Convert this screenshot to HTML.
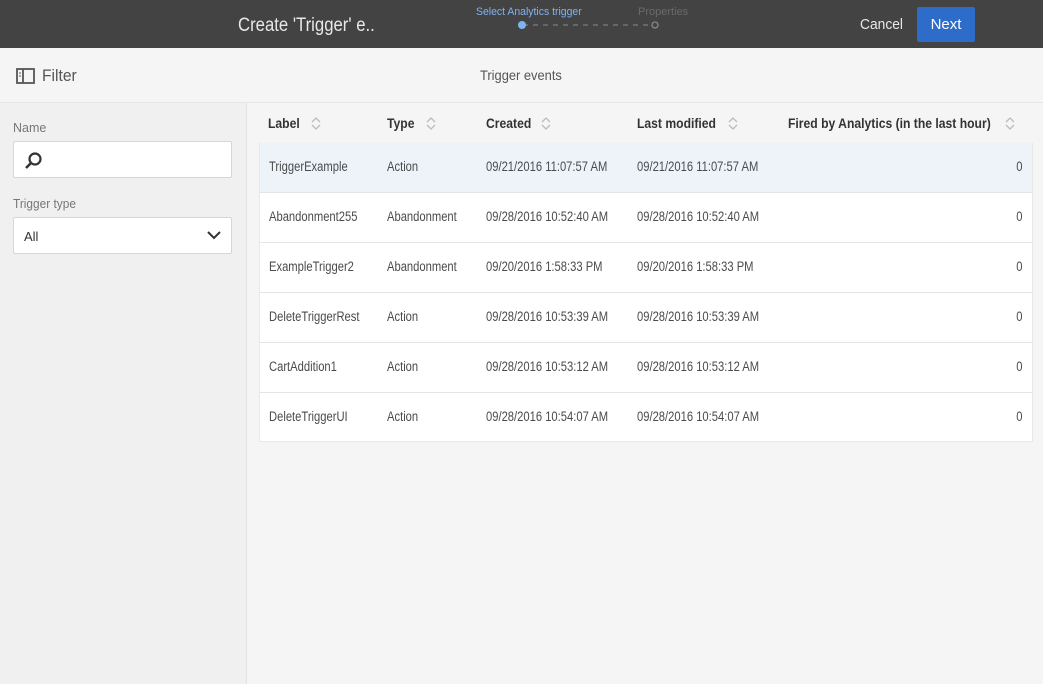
<!DOCTYPE html>
<html><head><style>
*{margin:0;padding:0;box-sizing:border-box}
body{width:1043px;height:684px;overflow:hidden;font-family:"Liberation Sans",sans-serif;background:#f5f5f5;position:relative;color:#4b4b4b}
.top{position:absolute;left:0;top:0;width:1043px;height:48px;background:#434343}
.abs{position:absolute;white-space:nowrap}
.sx{display:inline-block;transform:scaleX(.86);transform-origin:left center;white-space:nowrap}
.bar2{position:absolute;top:48px;left:0;width:1043px;height:55px;background:#f5f5f5;border-bottom:1px solid #e6e6e6}
.side{position:absolute;top:103px;left:0;width:247px;height:581px;background:#f0f0f0;border-right:1px solid #e3e3e3}
.inp{position:absolute;left:13px;width:219px;height:37px;background:#fff;border:1px solid #d6d6d6;border-radius:2px}
.table{position:absolute;left:259px;top:143px;width:774px;background:#fff;border:1px solid #e8e8e8;border-top:none}
.row{height:50px;border-bottom:1px solid #e4e4e4;position:relative;font-size:13.5px;color:#4b4b4b}
.row:last-child{border-bottom:none;height:48px}
.row span{position:absolute;top:16px;transform:scaleX(.83);transform-origin:left center;white-space:nowrap}
.row span.r{transform-origin:right center}
.th{position:absolute;top:116px;font-size:13.5px;font-weight:bold;color:#333;white-space:nowrap}
.th b{display:inline-block;transform:scaleX(.9);transform-origin:left center}
.sort{position:absolute;top:0}
</style></head><body>
<div class="top"></div>
<div class="abs" style="left:238px;top:15px;font-size:19px;color:#e8e8e8"><span class="sx" style="transform:scaleX(.88)">Create 'Trigger' e..</span></div>
<div class="abs" style="left:476px;top:6px;font-size:11px;color:#7fb3f0"><span class="sx" style="transform:scaleX(.95)">Select Analytics trigger</span></div>
<div class="abs" style="left:638px;top:6px;font-size:11px;color:#6a6a6a">Properties</div>
<svg class="abs" style="left:517px;top:20px" width="145" height="10"><line x1="6" y1="5" x2="135" y2="5" stroke="#888" stroke-dasharray="5,5"/><circle cx="5" cy="5" r="4" fill="#7fb3f0"/><circle cx="138" cy="5" r="3" fill="none" stroke="#888" stroke-width="1.3"/></svg>
<div class="abs" style="left:860px;top:16px;font-size:15px;color:#e8e8e8"><span class="sx" style="transform:scaleX(.92)">Cancel</span></div>
<div class="abs" style="left:917px;top:7px;width:58px;height:35px;background:#2d6cc9;border-radius:2px;color:#fff;font-size:15px;text-align:center;line-height:35px">Next</div>
<div class="bar2"></div>
<svg class="abs" style="left:16px;top:68px" width="19" height="16"><rect x="1" y="1" width="17" height="14" fill="none" stroke="#555" stroke-width="1.8"/><line x1="7" y1="1" x2="7" y2="15" stroke="#555" stroke-width="1.8"/><line x1="3" y1="5" x2="5" y2="5" stroke="#555"/><line x1="3" y1="8" x2="5" y2="8" stroke="#555"/></svg>
<div class="abs" style="left:42px;top:66px;font-size:17px;color:#555"><span class="sx" style="transform:scaleX(.92)">Filter</span></div>
<div class="abs" style="left:480px;top:67px;font-size:14px;color:#555"><span class="sx" style="transform:scaleX(.92)">Trigger events</span></div>
<div class="side"></div>
<div class="abs" style="left:13px;top:121px;font-size:12.5px;color:#777">Name</div>
<div class="inp" style="top:141px"><svg style="position:absolute;left:10px;top:9px" width="20" height="20"><circle cx="11" cy="8" r="5.5" fill="none" stroke="#333" stroke-width="2.2"/><line x1="7" y1="12" x2="2" y2="17" stroke="#333" stroke-width="2.6"/></svg></div>
<div class="abs" style="left:13px;top:197px;font-size:12.5px;color:#777"><span class="sx" style="transform:scaleX(.95)">Trigger type</span></div>
<div class="inp" style="top:217px"><span style="position:absolute;left:10px;top:11px;font-size:13px;color:#333">All</span><svg style="position:absolute;left:193px;top:12px" width="14" height="10"><polyline points="1,2 7,8 13,2" fill="none" stroke="#333" stroke-width="2"/></svg></div>

<div class="th" style="left:268px"><b>Label</b><svg class="sort" style="left:43px" width="10" height="15"><polyline points="1,6 5,2 9,6" fill="none" stroke="#bbb" stroke-width="1.3"/><polyline points="1,9 5,13 9,9" fill="none" stroke="#bbb" stroke-width="1.3"/></svg></div>
<div class="th" style="left:387px"><b>Type</b><svg class="sort" style="left:39px" width="10" height="15"><polyline points="1,6 5,2 9,6" fill="none" stroke="#bbb" stroke-width="1.3"/><polyline points="1,9 5,13 9,9" fill="none" stroke="#bbb" stroke-width="1.3"/></svg></div>
<div class="th" style="left:486px"><b>Created</b><svg class="sort" style="left:55px" width="10" height="15"><polyline points="1,6 5,2 9,6" fill="none" stroke="#bbb" stroke-width="1.3"/><polyline points="1,9 5,13 9,9" fill="none" stroke="#bbb" stroke-width="1.3"/></svg></div>
<div class="th" style="left:637px"><b>Last modified</b><svg class="sort" style="left:91px" width="10" height="15"><polyline points="1,6 5,2 9,6" fill="none" stroke="#bbb" stroke-width="1.3"/><polyline points="1,9 5,13 9,9" fill="none" stroke="#bbb" stroke-width="1.3"/></svg></div>
<div class="th" style="left:788px"><b>Fired by Analytics (in the last hour)</b><svg class="sort" style="left:217px" width="10" height="15"><polyline points="1,6 5,2 9,6" fill="none" stroke="#bbb" stroke-width="1.3"/><polyline points="1,9 5,13 9,9" fill="none" stroke="#bbb" stroke-width="1.3"/></svg></div>

<div class="table">
<div class="row" style="background:#eef3fa"><span style="left:9px">TriggerExample</span><span style="left:127px">Action</span><span style="left:226px">09/21/2016 11:07:57 AM</span><span style="left:377px">09/21/2016 11:07:57 AM</span><span class="r" style="right:9px">0</span></div>
<div class="row"><span style="left:9px">Abandonment255</span><span style="left:127px">Abandonment</span><span style="left:226px">09/28/2016 10:52:40 AM</span><span style="left:377px">09/28/2016 10:52:40 AM</span><span class="r" style="right:9px">0</span></div>
<div class="row"><span style="left:9px">ExampleTrigger2</span><span style="left:127px">Abandonment</span><span style="left:226px">09/20/2016 1:58:33 PM</span><span style="left:377px">09/20/2016 1:58:33 PM</span><span class="r" style="right:9px">0</span></div>
<div class="row"><span style="left:9px">DeleteTriggerRest</span><span style="left:127px">Action</span><span style="left:226px">09/28/2016 10:53:39 AM</span><span style="left:377px">09/28/2016 10:53:39 AM</span><span class="r" style="right:9px">0</span></div>
<div class="row"><span style="left:9px">CartAddition1</span><span style="left:127px">Action</span><span style="left:226px">09/28/2016 10:53:12 AM</span><span style="left:377px">09/28/2016 10:53:12 AM</span><span class="r" style="right:9px">0</span></div>
<div class="row"><span style="left:9px">DeleteTriggerUI</span><span style="left:127px">Action</span><span style="left:226px">09/28/2016 10:54:07 AM</span><span style="left:377px">09/28/2016 10:54:07 AM</span><span class="r" style="right:9px">0</span></div>
</div>
</body></html>
